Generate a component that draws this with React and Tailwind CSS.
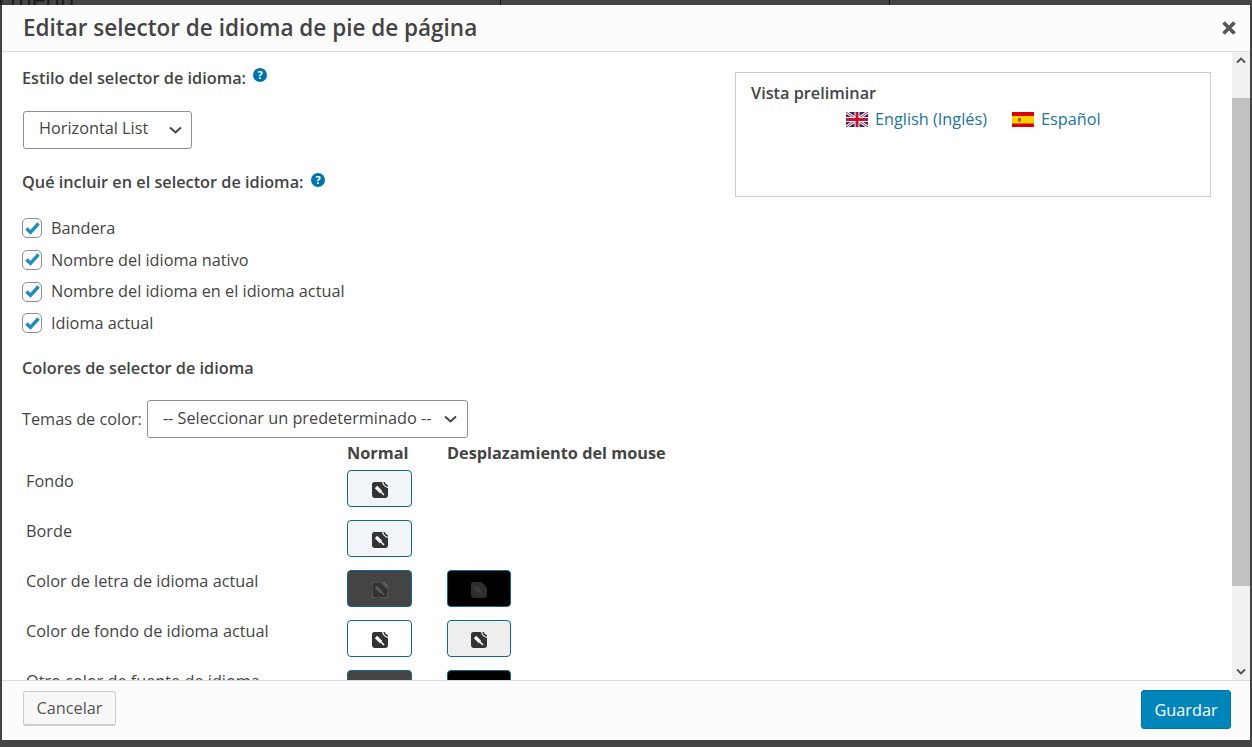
const font = { fontFamily: '"Open Sans", sans-serif' };

function Help() {
  return (
    <svg width="14" height="14" viewBox="0 0 14 14" className="shrink-0">
      <circle cx="7" cy="7" r="7" fill="#0073aa" />
      <text x="7" y="11" textAnchor="middle" fontSize="11" fontWeight="700" fill="#fff" fontFamily="Open Sans">?</text>
    </svg>
  );
}

function Chevron() {
  return (
    <svg width="13" height="8" viewBox="0 0 13 8" fill="none" stroke="#444" strokeWidth="2">
      <path d="M1 1.500 6.500 6.500 12 1.500" />
    </svg>
  );
}

function Check({ label }) {
  return (
    <div className="flex items-center h-[31.7px]">
      <span className="w-[20px] h-[20px] rounded-[5px] border border-[#8c8f94] bg-white flex items-center justify-center mr-[9px] shrink-0">
        <svg width="15" height="13" viewBox="0 0 15 13" fill="none" stroke="#1e8cbe" strokeWidth="3.400">
          <path d="M1.500 6.500 5.500 10.300 13.500 1.500" />
        </svg>
      </span>
      <span>{label}</span>
    </div>
  );
}

function Swatch({ bg, mode = "light", narrow }) {
  const body = mode === "black" ? "#2e2e2e" : mode === "dim" ? "#323232" : "#333";
  const drop = mode === "black" ? "#3c3c3c" : mode === "dim" ? "#5a5a5a" : "#fff";
  return (
    <div className={`${narrow ? "w-[64px]" : "w-[65px]"} h-[37px] pt-[2px] rounded-[4px] border border-[#12688c] flex items-center justify-center ${bg}`}>
      <svg width="16" height="16" viewBox="0 0 16 16">
        <path
          d="M2.500 0H10C10.500 3 13 5.500 16 6V13a3 3 0 0 1-3 3H3a3 3 0 0 1-3-3V2.500A2.500 2.500 0 0 1 2.500 0z"
          fill={body}
          stroke={mode === "dim" ? "#666" : "none"}
          strokeWidth="1"
        />
        {mode !== "black" && <path d="M12 0C12.500 2 14 3.500 16 4" fill="none" stroke={mode === "dim" ? "#666" : body} strokeWidth="1.400" />}
        {mode === "black" && <path d="M10 .5C12 1 15 4 15.500 6.500L10 6z" fill={body} />}
        <path d="M4 5 9 10" stroke={drop} strokeWidth="3.200" />
        <path d="M8 9 12 13" stroke={drop} strokeWidth="1.600" />
      </svg>
    </div>
  );
}

function ColorRow({ label, normal, hover, last }) {
  return (
    <div className={`flex ${last ? "h-[10px]" : "h-[50px]"}`}>
      <div className="w-[325px] pl-[4px] leading-[22px]">{label}</div>
      <div className="w-[100px]">{normal}</div>
      <div>{hover}</div>
    </div>
  );
}

function UkFlag() {
  return (
    <svg width="22" height="15" viewBox="0 0 22 15" className="shrink-0">
      <rect width="22" height="15" fill="#2b2a6b" />
      <path d="M0 0 22 15M22 0 0 15" stroke="#fff" strokeWidth="3" />
      <path d="M0 0 22 15M22 0 0 15" stroke="#c8102e" strokeWidth="1" />
      <path d="M11 0V15M0 7.500H22" stroke="#fff" strokeWidth="5" />
      <path d="M11 0V15M0 7.500H22" stroke="#c8102e" strokeWidth="3" />
    </svg>
  );
}

function EsFlag() {
  return (
    <svg width="22" height="15" viewBox="0 0 22 15" className="shrink-0">
      <rect width="22" height="15" fill="#d80000" />
      <rect y="4" width="22" height="7.500" fill="#f7d000" />
      <rect x="6" y="6" width="3" height="3.500" fill="#b5541c" />
    </svg>
  );
}

export default function App() {
  return (
    <div className="w-[1252px] h-[747px] bg-[#444] overflow-hidden flex flex-col text-[16.28px] text-[#444]" style={font}>
      <div className="h-[5px] overflow-hidden relative shrink-0 text-[#1a1a1a]">
        <span className="absolute left-[-11px] top-[-13px] text-[24px] leading-[24px] whitespace-nowrap">o menu</span>
        <span className="absolute left-[500px] top-0 w-px h-[5px] bg-[#111]" />
        <span className="absolute left-[889px] top-0 w-px h-[5px] bg-[#111]" />
      </div>
      <div className="ml-[2px] mr-[2px] h-[735px] bg-white flex flex-col shrink-0">
        <header className="h-[47px] bg-[#fcfcfc] border-b border-[#ddd] flex items-center justify-between pl-[21px] pr-[14px] shrink-0">
          <h1 className="text-[22.5px] font-semibold leading-[46px] text-[#444]">Editar selector de idioma de pie de página</h1>
          <svg width="14" height="14" viewBox="0 0 14 14" stroke="#555" strokeWidth="3.600">
            <path d="M1.500 1.500 12.500 12.500M12.500 1.500 1.500 12.500" />
          </svg>
        </header>

        <div className="flex flex-1 min-h-0">
          <main className="flex-1 overflow-hidden flex">
            <section className="w-[713px] pl-[20px] pt-[15px] shrink-0">
              <div className="flex items-start gap-[7px] font-semibold h-[22px] leading-[22px]">
                <span>Estilo del selector de idioma:</span>
                <span className="mt-[1px]"><Help /></span>
              </div>
              <div className="mt-[22px] ml-[1px] w-[169px] h-[38px] rounded-[3px] border border-[#8c8f94] flex items-center justify-between pl-[15px] pr-[9px]">
                <span className="relative top-[-2px]">Horizontal List</span>
                <Chevron />
              </div>
              <div className="mt-[22px] flex items-start gap-[7px] font-semibold h-[22px] leading-[22px]">
                <span>Qué incluir en el selector de idioma:</span>
                <span className="mt-[2px]"><Help /></span>
              </div>
              <div className="mt-[19.3px] h-[126.8px]">
                <Check label="Bandera" />
                <Check label="Nombre del idioma nativo" />
                <Check label="Nombre del idioma en el idioma actual" />
                <Check label="Idioma actual" />
              </div>
              <div className="mt-[18px] font-semibold leading-[22px]">Colores de selector de idioma</div>
              <div className="mt-[21px] flex items-center h-[38px]">
                <span className="mr-[5px]">Temas de color:</span>
                <div className="w-[321px] h-[38px] rounded-[3px] border border-[#8c8f94] flex items-center justify-between pl-[15px] pr-[10px]">
                  <span className="relative top-[-1px] whitespace-nowrap">-- Seleccionar un predeterminado --</span>
                  <Chevron />
                </div>
              </div>
              <div className="flex font-bold h-[22px] mt-[4px] leading-[22px]">
                <span className="w-[325px]" />
                <span className="w-[100px]">Normal</span>
                <span>Desplazamiento del mouse</span>
              </div>
              <div className="mt-[6px] leading-[22px]">
                <ColorRow label="Fondo" normal={<Swatch bg="bg-[#f1f5f8]" />} />
                <ColorRow label="Borde" normal={<Swatch bg="bg-[#f1f5f8]" />} />
                <ColorRow label="Color de letra de idioma actual" normal={<Swatch bg="bg-[#444]" mode="dim" />} hover={<Swatch bg="bg-black" mode="black" narrow />} />
                <ColorRow label="Color de fondo de idioma actual" normal={<Swatch bg="bg-white" />} hover={<Swatch bg="bg-[#eee]" narrow />} />
                <ColorRow last label="Otro color de fuente de idioma" normal={<Swatch bg="bg-[#444]" mode="dim" />} hover={<Swatch bg="bg-black" mode="black" narrow />} />
              </div>
            </section>
            <aside className="pt-[20px] pl-[20px]">
              <div className="w-[476px] h-[125px] border border-[#ccc] pl-[15px] pt-[9px]">
                <div className="font-semibold leading-[22px]">Vista preliminar</div>
                <div className="flex items-center mt-[4px] h-[22px] ml-[95px] text-[#21759b]">
                  <UkFlag />
                  <span className="ml-[7px]">English (Inglés)</span>
                  <span className="ml-[25px]"><EsFlag /></span>
                  <span className="ml-[7px]">Español</span>
                </div>
              </div>
            </aside>
          </main>
          <div className="w-[18px] bg-[#f1f1f1] flex flex-col shrink-0">
            <div className="h-[17px] flex items-center justify-center shrink-0">
              <svg width="10" height="7" viewBox="0 0 10 7" fill="none" stroke="#505050" strokeWidth="1.800"><path d="M1 5.500 5 1.500 9 5.500" /></svg>
            </div>
            <div className="h-[29px] shrink-0" />
            <div className="h-[488px] bg-[#c1c1c1] shrink-0" />
            <div className="flex-1" />
            <div className="h-[17px] flex items-center justify-center shrink-0">
              <svg width="10" height="7" viewBox="0 0 10 7" fill="none" stroke="#505050" strokeWidth="1.800"><path d="M1 1.500 5 5.500 9 1.500" /></svg>
            </div>
          </div>
        </div>

        <footer className="h-[60px] bg-[#fcfcfc] border-t border-[#ddd] flex items-center justify-between pl-[21px] pr-[19px] shrink-0">
          <button className="w-[93px] h-[35px] rounded-[3px] border border-[#ccc] border-b-2 bg-[#f7f7f7] text-[#555] mt-[-4px]">Cancelar</button>
          <button className="w-[90px] h-[39px] pt-[1px] rounded-[3px] bg-[#0085ba] border border-[#0073aa] text-white mt-[-2px]">Guardar</button>
        </footer>
      </div>
    </div>
  );
}
